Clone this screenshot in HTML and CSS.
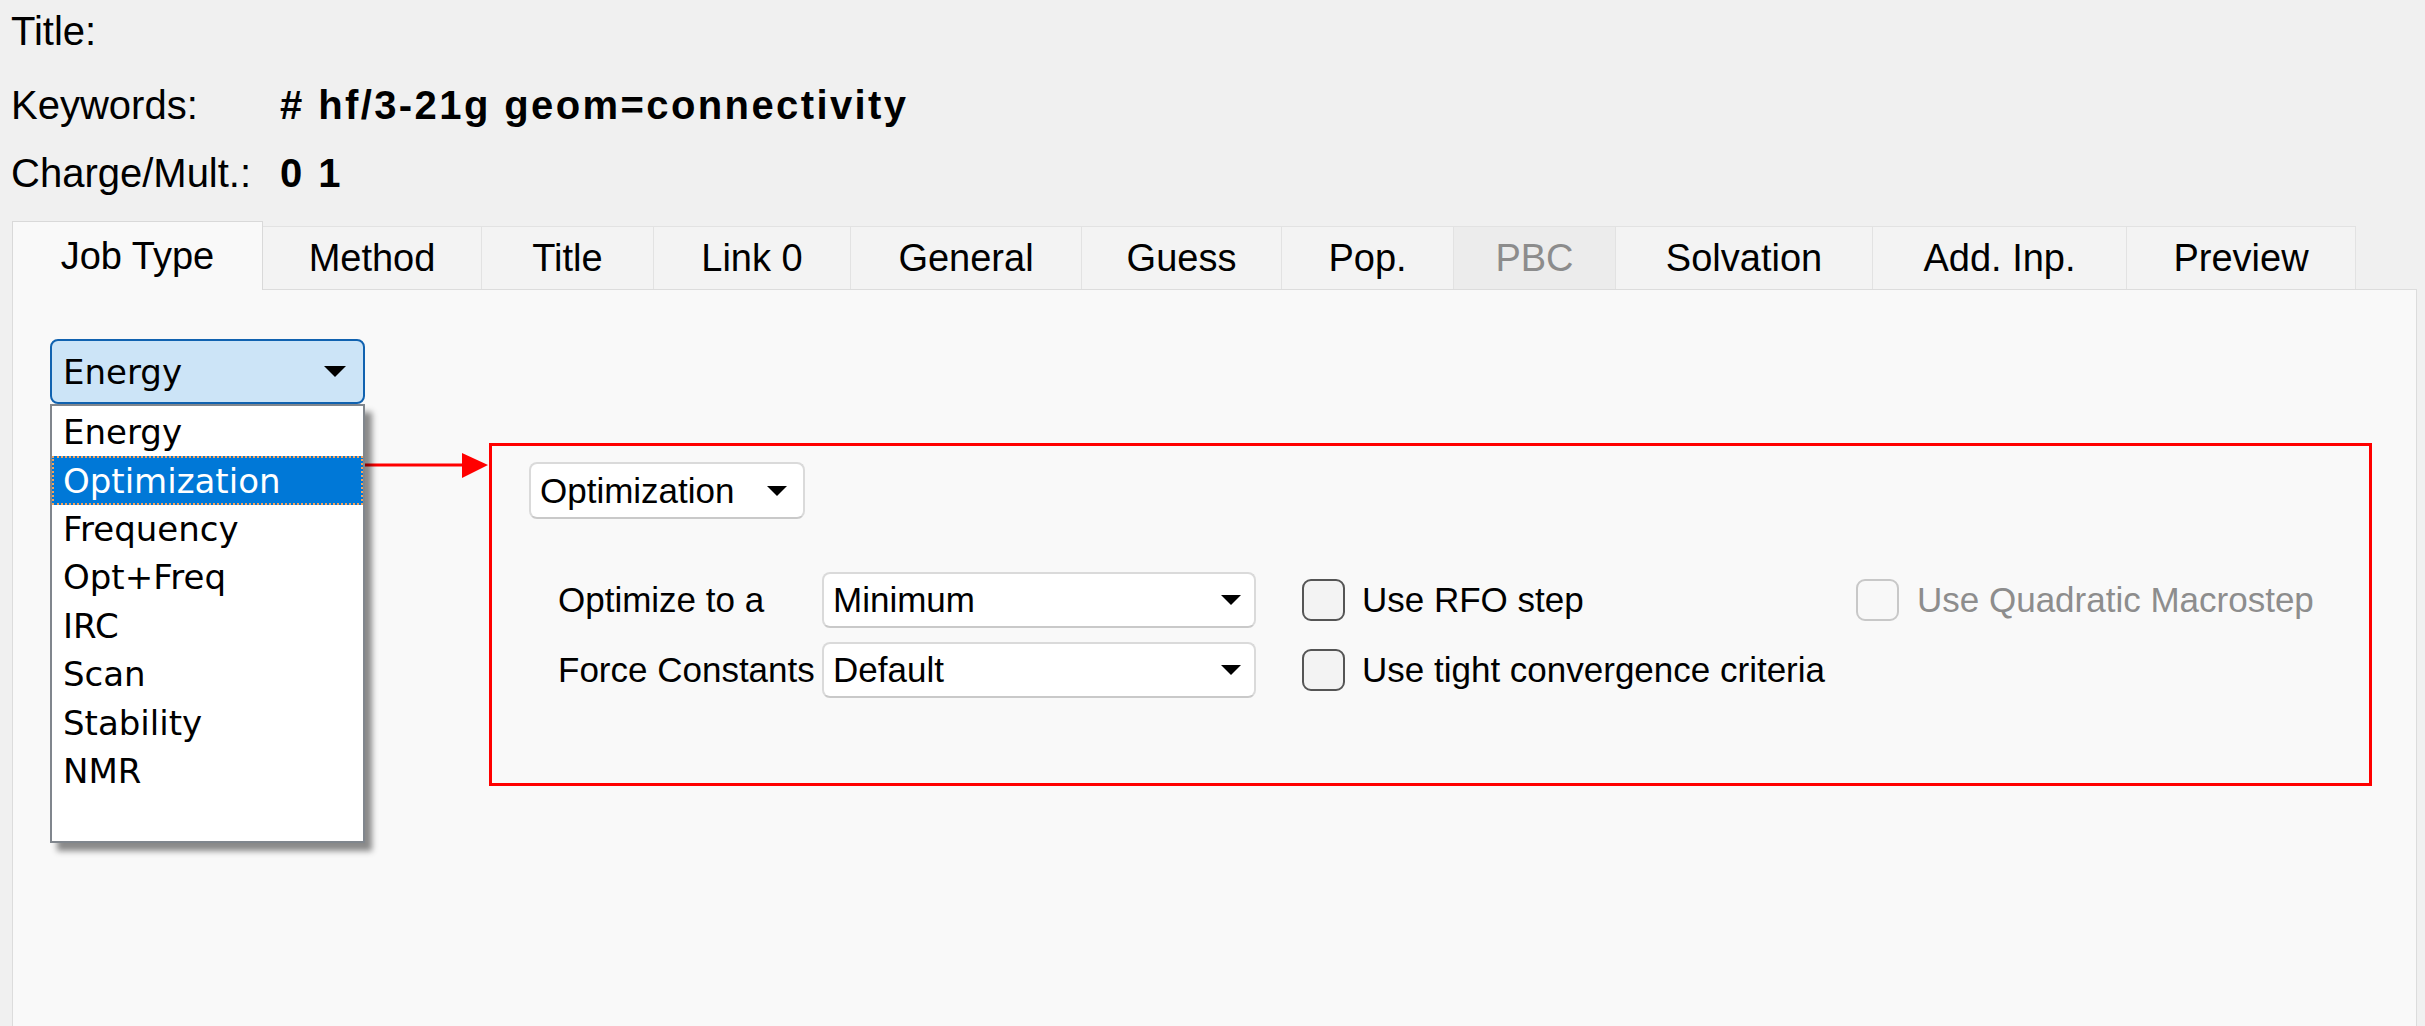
FILE: index.html
```html
<!DOCTYPE html>
<html>
<head>
<meta charset="utf-8">
<title>Job Type</title>
<link rel="stylesheet" href="styles.css">
</head>
<body>
<div class="header">
  <div class="hrow"><span class="hlabel">Title:</span></div>
  <div class="hrow hrow--kw"><span class="hlabel">Keywords:</span><span class="hvalue"># hf/3-21g geom=connectivity</span></div>
  <div class="hrow hrow--cm"><span class="hlabel">Charge/Mult.:</span><span class="hvalue">0 1</span></div>
</div>

<div class="tabs">
  <div class="tab tab--active t-job">Job Type</div>
  <div class="tab t-method">Method</div>
  <div class="tab t-title">Title</div>
  <div class="tab t-link">Link 0</div>
  <div class="tab t-general">General</div>
  <div class="tab t-guess">Guess</div>
  <div class="tab t-pop">Pop.</div>
  <div class="tab tab--disabled t-pbc">PBC</div>
  <div class="tab t-solv">Solvation</div>
  <div class="tab t-add">Add. Inp.</div>
  <div class="tab t-preview">Preview</div>
</div>

<div class="panel">
  <div class="jobtype">
    <div class="combo-main"><span>Energy</span><span class="tri tri--lg"></span></div>
    <ul class="droplist">
      <li>Energy</li>
      <li class="sel">Optimization</li>
      <li>Frequency</li>
      <li>Opt+Freq</li>
      <li>IRC</li>
      <li>Scan</li>
      <li>Stability</li>
      <li>NMR</li>
    </ul>
  </div>

  <svg class="pointer" width="130" height="32" viewBox="0 0 130 32">
    <line x1="0" y1="15" x2="104" y2="15" stroke="#ff0000" stroke-width="3"/>
    <polygon points="102,3 128,15 102,28" fill="#ff0000"/>
  </svg>

  <div class="annot">
    <div class="combo combo--opt"><span>Optimization</span><span class="tri"></span></div>
    <div class="opts">
      <span class="lbl">Optimize to a</span>
      <div class="combo"><span>Minimum</span><span class="tri"></span></div>
      <label class="check"><span class="box"></span><span>Use RFO step</span></label>
      <label class="check check--disabled"><span class="box"></span><span>Use Quadratic Macrostep</span></label>

      <span class="lbl">Force Constants</span>
      <div class="combo"><span>Default</span><span class="tri"></span></div>
      <label class="check"><span class="box"></span><span>Use tight convergence criteria</span></label>
      <span></span>
    </div>
  </div>
</div>
</body>
</html>
```

FILE: styles.css
```css
* { box-sizing: border-box; }
html, body { margin: 0; padding: 0; }
body {
  background: #f0f0f0;
  font-family: "Liberation Sans", Arial, sans-serif;
  color: #000;
  width: 2425px;
  height: 1026px;
  overflow: hidden;
}

/* header */
.header { padding-left: 11px; }
.hrow { display: flex; align-items: center; height: 62px; font-size: 40px; }
.hrow--kw { margin-top: 12px; }
.hrow--cm { margin-top: 6px; }
.hlabel { width: 269px; flex: none; }
.hvalue { font-weight: bold; letter-spacing: 2.4px; }

/* tabs */
.tabs {
  display: flex;
  align-items: flex-end;
  margin: 17px 0 -1px 12px;
  position: relative;
  z-index: 1;
  font-size: 38px;
}
.tab {
  height: 63px;
  margin-bottom: 1px;
  flex: none;
  display: flex;
  align-items: center;
  justify-content: center;
  background: #f3f3f3;
  border: 1px solid #e2e2e2;
  border-left: none;
  border-bottom: none;
  white-space: nowrap;
}
.tab--active {
  height: 69px;
  margin-bottom: 0;
  background: #f9f9f9;
  border: 1px solid #d9d9d9;
  border-bottom: none;
}
.tab--disabled { background: #ececec; color: #8c8c8c; }
.t-job { width: 251px; }
.t-method { width: 219px; }
.t-title { width: 172px; }
.t-link { width: 197px; }
.t-general { width: 231px; }
.t-guess { width: 200px; }
.t-pop { width: 172px; }
.t-pbc { width: 162px; }
.t-solv { width: 257px; }
.t-add { width: 254px; }
.t-preview { width: 229px; }

/* panel */
.panel {
  position: relative;
  margin-left: 12px;
  width: 2405px;
  height: 760px;
  background: #f9f9f9;
  border: 1px solid #dcdcdc;
  display: flex;
  align-items: flex-start;
  padding: 49px 0 0 37px;
}

.jobtype { position: relative; width: 315px; flex: none; }
.combo-main {
  height: 65px;
  background: #cce4f7;
  border: 2px solid #1062b0;
  border-radius: 8px;
  display: flex;
  align-items: center;
  justify-content: space-between;
  padding: 0 17px 0 11px;
  font-family: "DejaVu Sans", sans-serif;
  font-size: 34px;
}
.tri {
  width: 0; height: 0;
  border-left: 10px solid transparent;
  border-right: 10px solid transparent;
  border-top: 10px solid #000;
}
.tri--lg {
  border-left-width: 11px;
  border-right-width: 11px;
  border-top-width: 11px;
}

.droplist {
  position: absolute;
  left: 0;
  top: 100%;
  width: 315px;
  height: 439px;
  margin: 0;
  padding: 2px 0 0 0;
  list-style: none;
  background: #fff;
  border: 2px solid #80868d;
  box-shadow: 7px 8px 6px rgba(0, 0, 0, 0.45);
  font-family: "DejaVu Sans", sans-serif;
  font-size: 34px;
  z-index: 2;
}
.droplist li {
  height: 48.4px;
  display: flex;
  align-items: center;
  padding-left: 11px;
}
.droplist .sel {
  background: #0078d7;
  color: #fff;
  outline: 2px dotted #f5a25a;
  outline-offset: -2px;
}

.pointer { position: absolute; left: 347px; top: 160px; }

/* annotation box */
.annot {
  flex: none;
  width: 1883px;
  height: 343px;
  margin: 104px 0 0 124px;
  border: 3px solid #ff0000;
  padding: 16px 0 0 37px;
  font-size: 35px;
}
.combo {
  height: 56px;
  background: #fff;
  border: 2px solid #dadada;
  border-bottom-color: #c9c9c9;
  border-radius: 8px;
  display: flex;
  align-items: center;
  justify-content: space-between;
  padding: 0 13px 0 9px;
}
.combo--opt { width: 276px; height: 57px; padding-right: 16px; }

.opts {
  display: grid;
  grid-template-columns: 264px 434px 600px auto;
  grid-auto-rows: 56px;
  row-gap: 14px;
  margin: 53px 0 0 29px;
  align-items: center;
}
.check { display: flex; align-items: center; gap: 17px; padding-left: 46px; }
.box {
  width: 43px;
  height: 42px;
  flex: none;
  border: 2.5px solid #555;
  border-radius: 9px;
  background: #f3f3f3;
}
.check--disabled { padding-left: 0; color: #8d8d8d; gap: 18px; }
.check--disabled .box { border-color: #c8c8c8; background: #f8f8f8; }
```
